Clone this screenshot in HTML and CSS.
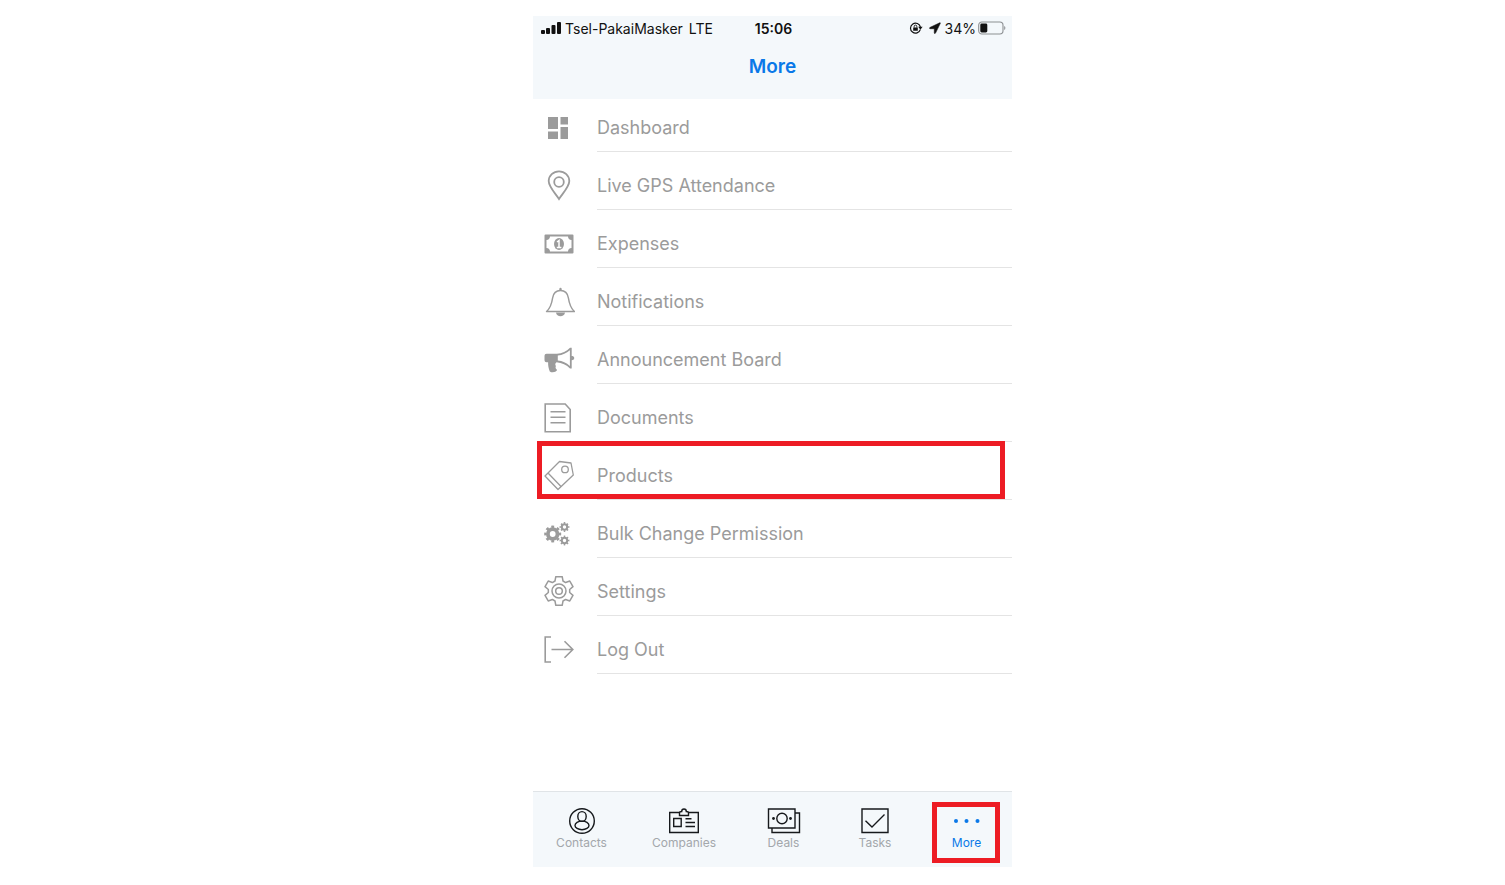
FILE: index.html
```html
<!DOCTYPE html>
<html lang="en">
<head>
<meta charset="utf-8">
<meta name="viewport" content="width=device-width, initial-scale=1">
<title>More</title>
<link rel="stylesheet" href="styles.css">
</head>
<body>
<div class="phone">
  <header class="header">
    <div class="status">
      <div class="status-left">
        <svg class="signal" viewBox="0 0 20 12" aria-hidden="true"><rect x="0" y="8" width="4" height="4" rx="1"/><rect x="5" y="6" width="4" height="6" rx="1"/><rect x="10.5" y="3" width="4" height="9" rx="1"/><rect x="16" y="0" width="4" height="12" rx="1"/></svg>
        <span>Tsel-PakaiMasker</span>
        <span class="network">LTE</span>
      </div>
      <time class="clock">15:06</time>
      <div class="status-right">
        <svg class="lock" viewBox="0 0 14 12" aria-hidden="true"><path d="M11.3 7.6A5 5 0 1 1 11.4 5" fill="none" stroke="currentColor" stroke-width="1.2"/><path d="M9.2 4.8h4.4l-2.2 3z"/><rect x="4.2" y="5.4" width="4.6" height="3.4" rx=".4"/><path d="M5.2 5.6V4.4a1.3 1.3 0 0 1 2.6 0v1.2" fill="none" stroke="currentColor" stroke-width=".9"/></svg>
        <svg class="location" viewBox="0 0 12 12" aria-hidden="true"><path d="M10.8.8.9 5.5c-.6.4-.4 1.200.2 1.200h4.200v4.200c0 .7.9.9 1.200.2L11.300 1.300c.2-.4-.1-.7-.5-.5z" stroke="currentColor" stroke-width=".6"/></svg>
        <span class="charge">34%</span>
        <svg class="battery" viewBox="0 0 28 14" aria-hidden="true"><rect x=".7" y="1" width="24.3" height="12" rx="3.2" fill="none" stroke="#8c8f92" stroke-width="1.1"/><rect x="2.3" y="2.6" width="7" height="8.8" rx="1.4"/><path d="M26.200 5v4c1.600-.6 1.600-3.400 0-4z" fill="#8c8f92"/></svg>
      </div>
    </div>
    <h1 class="title">More</h1>
  </header>

  <main class="content">
    <ul class="menu">
      <li class="item"><a class="link" href="#dashboard">
        <svg class="icon" viewBox="0 0 32 32" aria-hidden="true"><path fill="currentColor" d="M5 5h10v12H5zM5 19.5h10V27H5zM17.5 5H25v7.5h-7.5zM17.5 15H25v12h-7.5z"/></svg>
        <span class="label">Dashboard</span></a></li>
      <li class="item"><a class="link" href="#attendance">
        <svg class="icon" viewBox="0 0 32 32" aria-hidden="true"><g fill="none" stroke="currentColor" stroke-width="1.8"><path d="M16 29C13 24 5.7 17 5.7 11a10.3 9.7 0 0 1 20.6 0c0 6-7.3 13-10.3 18z"/><circle cx="16" cy="12" r="4.8"/></g></svg>
        <span class="label">Live GPS Attendance</span></a></li>
      <li class="item"><a class="link" href="#expenses">
        <svg class="icon" viewBox="0 0 32 32" aria-hidden="true"><path fill="currentColor" fill-rule="evenodd" d="M2.5 6.5h27a1 1 0 0 1 1 1v17a1 1 0 0 1-1 1h-27a1 1 0 0 1-1-1v-17a1 1 0 0 1 1-1zM7 8.5A3.8 3.8 0 0 1 3.5 12v8A3.8 3.8 0 0 1 7 23.5h18a3.8 3.8 0 0 1 3.5-3.5v-8A3.8 3.8 0 0 1 25 8.5z"/><ellipse cx="16" cy="16" rx="5" ry="6" fill="currentColor"/><path d="M14 14l2-1.5v6.7M13.8 19.5h4.6" fill="none" stroke="#fff" stroke-width="1.5"/></svg>
        <span class="label">Expenses</span></a></li>
      <li class="item"><a class="link" href="#notifications">
        <svg class="icon" viewBox="0 0 32 32" aria-hidden="true"><path d="M17.5 4.600c-4.300 0-7.100 2.600-7.900 7.400-.9 6-1.800 9.700-6 13.500h27.800c-4.200-3.800-5.100-7.500-6-13.500-.8-4.800-3.600-7.400-7.900-7.400z" fill="none" stroke="currentColor" stroke-width="1.5" stroke-linejoin="round"/><path fill="currentColor" d="M16.300 3.200a1.200 1.400 0 0 1 2.400 0v1.500h-2.400zM13 26.500h9c-.5 5-8.500 5-9 0z"/></svg>
        <span class="label">Notifications</span></a></li>
      <li class="item"><a class="link" href="#announcements">
        <svg class="icon" viewBox="0 0 32 32" aria-hidden="true"><path fill="currentColor" fill-rule="evenodd" d="M3.500 9.700h10.500C19 9.700 23.500 7.500 27 3.800h1.700V12a2 2 0 0 1 1 4l-1 .3v8.200H27C23.500 21 19 18.700 13.500 18.300c-1.500 1.200-1.500 2.500-.6 3.800-.8 1.600-.1 2.800 1.200 4-1.500 2.600-5.400 2.800-7.300 1.300-1.200-3-1.800-5.800-1.700-9.200H3.500a2 2 0 0 1-2-2v-4.500a2 2 0 0 1 2-2zM26.900 6.200c-3.500 3-7.400 4.800-12.100 5.300v5c4.700.5 8.600 2.300 12.100 5.400z"/></svg>
        <span class="label">Announcement Board</span></a></li>
      <li class="item"><a class="link" href="#documents">
        <svg class="icon" viewBox="0 0 32 32" aria-hidden="true"><path fill="none" stroke="currentColor" stroke-width="1.6" d="M2.200 2h20l5 5.500v22.200h-25zM7.500 9.700h15M7.500 15.200h15M7.500 20.700h15"/></svg>
        <span class="label">Documents</span></a></li>
      <li class="item marked"><a class="link" href="#products">
        <svg class="icon" viewBox="0 0 32 32" aria-hidden="true"><g fill="none" stroke="currentColor" stroke-width="1.300" stroke-linejoin="round"><path d="M2 16 16.500 1.500 28 3l2.300 12L15 29.500zM5 13l13 13.500"/><circle cx="22" cy="9.400" r="3.300"/></g></svg>
        <span class="label">Products</span></a></li>
      <li class="item"><a class="link" href="#permissions">
        <svg class="icon" viewBox="0 0 32 32" aria-hidden="true"><g fill="none" stroke="currentColor"><circle cx="9.700" cy="16" r="4.800" stroke-width="3.800"/><circle cx="9.700" cy="16" r="7.300" stroke-width="2.400" pathLength="16" stroke-dasharray="1 1" stroke-dashoffset=".5"/><circle cx="21.500" cy="9" r="2.700" stroke-width="2"/><circle cx="21.500" cy="9" r="4.100" stroke-width="1.600" pathLength="16" stroke-dasharray="1 1" stroke-dashoffset=".5"/><circle cx="21.500" cy="22.500" r="2.700" stroke-width="2"/><circle cx="21.500" cy="22.500" r="4.100" stroke-width="1.600" pathLength="16" stroke-dasharray="1 1" stroke-dashoffset=".5"/></g></svg>
        <span class="label">Bulk Change Permission</span></a></li>
      <li class="item"><a class="link" href="#settings">
        <svg class="icon" viewBox="-16 -15 32 32" aria-hidden="true"><g fill="none" stroke="currentColor" stroke-width="1.500" stroke-linejoin="round"><path d="M-4-10-3.200-14.300H3.200L4-10 6.660-8.460 10.780-9.920 13.980-4.380 10.660-1.540V1.540L13.980 4.380 10.780 9.920 6.660 8.460 4 10 3.200 14.300H-3.200L-4 10-6.660 8.460-10.780 9.920-13.980 4.380-10.660 1.540V-1.540L-13.980-4.380-10.780-9.920-6.660-8.460z"/><circle r="7"/><circle r="3.300"/></g></svg>
        <span class="label">Settings</span></a></li>
      <li class="item"><a class="link" href="#logout">
        <svg class="icon" viewBox="0 0 32 32" aria-hidden="true"><path fill="none" stroke="currentColor" stroke-width="1.600" d="M8 3H2.200v25H8M8.500 15.500h21.300M21.500 7.200l8.300 8.300-8.300 8.300"/></svg>
        <span class="label">Log Out</span></a></li>
    </ul>
  </main>

  <nav class="tabs">
    <a class="tab" href="#contacts">
      <svg class="tab-icon" viewBox="0 0 36 28" aria-hidden="true"><circle cx="18" cy="14" r="12.300"/><ellipse cx="18" cy="9.500" rx="4.200" ry="4.900"/><ellipse cx="18" cy="18.400" rx="7" ry="4.300"/></svg>
      <span>Contacts</span></a>
    <a class="tab" href="#companies">
      <svg class="tab-icon" viewBox="0 0 36 28" aria-hidden="true"><path d="M14 5.500H3.700v20h28.600v-20H22M13.500 8.500v-2.800c0-.8.800-1.200 2.200-1.200a2.300 2.500 0 0 1 4.600 0c1.400 0 2.200.4 2.200 1.200v2.800zM7.700 11.500h7.500v8H7.700zM19.500 11.700h6M19.500 15.500H29M19.500 19.500H29"/></svg>
      <span>Companies</span></a>
    <a class="tab" href="#deals">
      <svg class="tab-icon" viewBox="0 0 36 28" aria-hidden="true"><path d="M2.500 2h26.500v19H2.500zM29 6h4.500v19.500H6V21"/><circle cx="16" cy="11.500" r="5.200"/><circle class="dot" cx="7.500" cy="11.500" r="1.400"/><circle class="dot" cx="24.500" cy="11.500" r="1.400"/></svg>
      <span>Deals</span></a>
    <a class="tab" href="#tasks">
      <svg class="tab-icon" viewBox="0 0 36 28" aria-hidden="true"><path d="M5 2h26v23.500H5zM8.500 13.700 15 20 27.500 7.500"/></svg>
      <span>Tasks</span></a>
    <a class="tab active marked" href="#more" aria-current="page">
      <svg class="tab-icon" viewBox="0 0 36 28" aria-hidden="true"><circle class="dot" cx="7" cy="14" r="2"/><circle class="dot" cx="17.500" cy="14" r="2"/><circle class="dot" cx="28.500" cy="14" r="2"/></svg>
      <span>More</span></a>
  </nav>
</div>
</body>
</html>
```
FILE: styles.css
```css
* {
  box-sizing: border-box;
}

body {
  margin: 0;
  padding: 16px 0 18px 40px;
  background: #fff;
  font-family: Inter, "Liberation Sans", sans-serif;
}

a {
  color: inherit;
  text-decoration: none;
}

svg {
  display: block;
  flex: none;
}

.phone {
  display: flex;
  flex-direction: column;
  max-width: 479px;
  min-height: calc(100vh - 34px);
  margin: 0 auto;
}

.header {
  padding-bottom: 5px;
  background: #f4f8fb;
}

.status {
  display: grid;
  grid-template-columns: 1fr auto 1fr;
  align-items: center;
  height: 24px;
  padding: 0 6px 0 8px;
  color: #111;
  font-size: 14px;
}

.status-left,
.status-right {
  display: flex;
  align-items: center;
  gap: 4px;
}

.status-right {
  justify-content: flex-end;
  gap: 2px;
}

.status svg {
  fill: currentColor;
}

.signal {
  width: 20px;
  height: 12px;
}

.network {
  margin-left: 2px;
}

.clock {
  font-weight: 600;
}

.lock {
  width: 14px;
  height: 12px;
  margin-right: 4px;
}

.location {
  width: 12px;
  height: 12px;
}

.charge {
  margin-left: 2px;
}

.battery {
  width: 28px;
  height: 14px;
}

.title {
  margin: 0;
  color: #0a78e8;
  font-size: 19px;
  font-weight: 600;
  line-height: 54px;
  text-align: center;
}

.content {
  flex: 1;
}

.menu {
  margin: 0;
  padding: 0;
  list-style: none;
}

.item {
  position: relative;
  padding-top: 11px;
}

.item:first-child {
  padding-top: 6px;
}

.link {
  display: flex;
  gap: 22px;
  padding-left: 10px;
  color: #9b9b9b;
  font-size: 18px;
  line-height: 46px;
}

.icon {
  width: 32px;
  height: 32px;
  margin-top: 7px;
}

.label {
  flex: 1;
  border-bottom: 1px solid #e4e4e4;
}

.marked::after {
  position: absolute;
  border: 5px solid #ed1c24;
  content: "";
  pointer-events: none;
}

.item.marked::after {
  inset: -1px 7px 1px 4px;
}

.tabs {
  display: grid;
  grid-template-columns: 97fr 108fr 91fr 92fr 91fr;
  height: 76px;
  border-top: 1px solid #e0e4e7;
  background: #f4f8fb;
}

.tab {
  position: relative;
  display: flex;
  flex-direction: column;
  align-items: center;
  padding-top: 15px;
  color: #a3a7ab;
  font-size: 12px;
  line-height: 16px;
}

.tab-icon {
  width: 36px;
  height: 28px;
  fill: none;
  stroke: #16191c;
  stroke-width: 1.4;
}

.tab-icon .dot {
  fill: #16191c;
  stroke: none;
}

.active {
  color: #0a78e8;
}

.active .tab-icon .dot {
  fill: currentColor;
}

.tab.marked::after {
  inset: 10px 12px 4px 11px;
}
```
